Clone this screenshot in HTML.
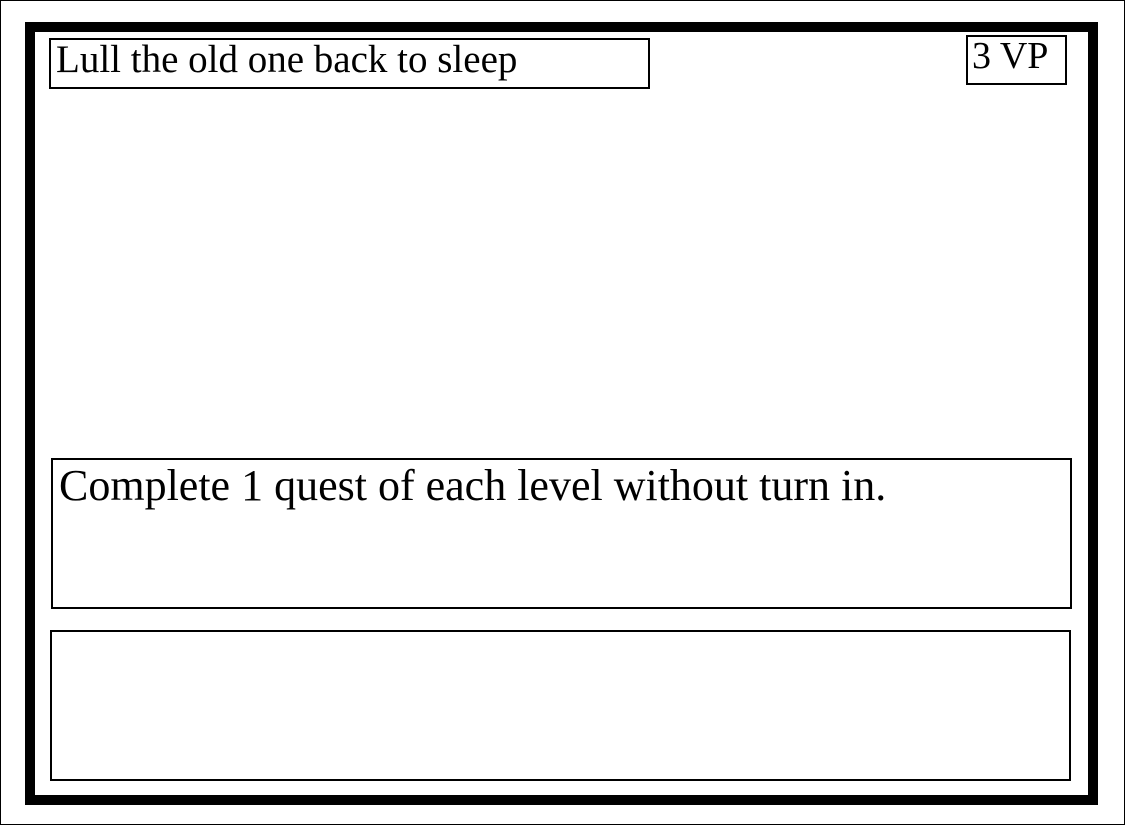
<!DOCTYPE html>
<html><head><style>
body{margin:0;width:1125px;height:825px;position:relative;background:#fff;font-family:"Liberation Serif",serif;overflow:hidden}
div{position:absolute;box-sizing:border-box}
</style></head><body>
<div style="left:0;top:0;width:1125px;height:825px;border:1px solid #000"></div>
<div style="left:25px;top:22px;width:1073px;height:783px;border:10px solid #000"></div>
<div style="left:49px;top:38px;width:601px;height:51px;border:2px solid #000;font-size:39px;line-height:39px;padding-left:5px;white-space:nowrap">Lull the old one back to sleep</div>
<div style="left:966px;top:35px;width:101px;height:50px;border:2px solid #000;font-size:38px;line-height:38px;padding-left:4px;white-space:nowrap">3 VP</div>
<div style="left:51px;top:458px;width:1021px;height:151px;border:2px solid #000;font-size:44px;line-height:44px;padding:4px 0 0 6px;white-space:nowrap">Complete 1 quest of each level without turn in.</div>
<div style="left:50px;top:630px;width:1021px;height:151px;border:2px solid #000"></div>
</body></html>
